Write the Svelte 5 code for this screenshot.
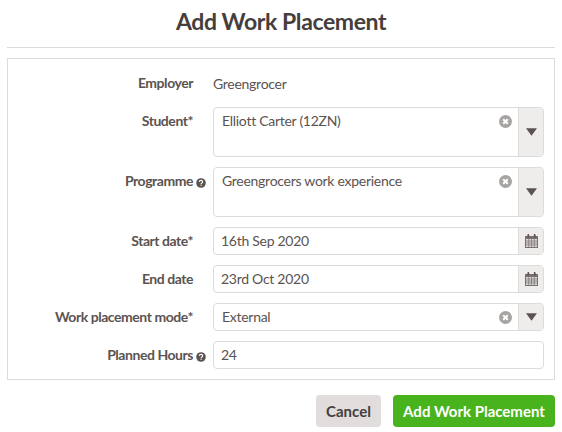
<script>
  const calendarRows = [0, 1, 2];
</script>

{#snippet help()}
  <svg class="help" viewBox="0 0 10 10" aria-hidden="true">
    <circle cx="5" cy="5" r="4.8" fill="#5b5351" />
    <path d="M3.3 3.9C3.4 2.9 4.1 2.4 5 2.4c1 0 1.7.6 1.7 1.4 0 .7-.4 1-.9 1.3-.4.2-.6.4-.6.9" fill="none" stroke="#fff" stroke-width="1.1" />
    <rect x="4.5" y="6.6" width="1.2" height="1.2" fill="#fff" />
  </svg>
{/snippet}

{#snippet clear()}
  <svg class="clear" viewBox="0 0 12 12" aria-hidden="true">
    <circle cx="6" cy="6" r="6" fill="#a8a4a2" />
    <path d="M3.9 3.9l4.2 4.2M8.1 3.9L3.9 8.1" stroke="#fff" stroke-width="1.9" />
  </svg>
{/snippet}

{#snippet arrow()}
  <span class="addon">
    <svg class="arrow" viewBox="0 0 10 7" aria-hidden="true"><path d="M0 0h10L5 7z" fill="#5b5351" /></svg>
  </span>
{/snippet}

{#snippet calendar()}
  <span class="addon">
    <svg class="cal" viewBox="0 0 13 14" aria-hidden="true">
      <rect x="0" y="2" width="13" height="12" fill="#77706e" />
      <rect x="1" y="5" width="11" height="8" fill="#dcd9d7" />
      {#each calendarRows as r}
        <path d="M1 {7 + r * 2}h11" stroke="#77706e" stroke-width="0.7" />
      {/each}
      <path d="M3.7 5v8M6.5 5v8M9.3 5v8" stroke="#77706e" stroke-width="0.7" />
      <rect x="2.4" y="0" width="1.8" height="3.6" rx="0.7" fill="#5b5351" />
      <rect x="8.8" y="0" width="1.8" height="3.6" rx="0.7" fill="#5b5351" />
    </svg>
  </span>
{/snippet}

<div class="dialog">
  <h1>Add Work Placement</h1>
  <hr />
  <form class="panel">
    <div class="row">
      <span class="label">Employer</span>
      <span class="static">Greengrocer</span>
    </div>
    <div class="row">
      <span class="label">Student*</span>
      <div class="field tall">
        <span class="value">Elliott Carter (12ZN)</span>
        {@render clear()}
        {@render arrow()}
      </div>
    </div>
    <div class="row">
      <span class="label">Programme{@render help()}</span>
      <div class="field tall">
        <span class="value">Greengrocers work experience</span>
        {@render clear()}
        {@render arrow()}
      </div>
    </div>
    <div class="row">
      <span class="label">Start date*</span>
      <div class="field">
        <span class="value date">16th Sep 2020</span>
        {@render calendar()}
      </div>
    </div>
    <div class="row">
      <span class="label">End date</span>
      <div class="field">
        <span class="value date">23rd Oct 2020</span>
        {@render calendar()}
      </div>
    </div>
    <div class="row">
      <span class="label">Work placement mode*</span>
      <div class="field">
        <span class="value">External</span>
        {@render clear()}
        {@render arrow()}
      </div>
    </div>
    <div class="row">
      <span class="label">Planned Hours{@render help()}</span>
      <div class="field">
        <span class="value date">24</span>
      </div>
    </div>
  </form>
  <div class="actions">
    <button type="button" class="cancel">Cancel</button>
    <button type="button" class="submit">Add Work Placement</button>
  </div>
</div>

<style>
  :global(body) {
    background: #fff;
  }

  .dialog {
    width: 548px;
    padding: 0 7px;
    font-family: "Lato", "Open Sans", sans-serif;
    font-size: 14px;
    letter-spacing: -0.28px;
    color: #5b5351;
  }

  h1 {
    margin: 0;
    height: 47px;
    padding-top: 6px;
    box-sizing: border-box;
    font-size: 23px;
    line-height: 30px;
    font-weight: 700;
    letter-spacing: -0.4px;
    text-align: center;
    color: #453e3c;
  }

  hr {
    margin: 0 0 10px;
    border: 0;
    border-top: 1px solid #dedcdb;
  }

  .panel {
    display: flex;
    flex-direction: column;
    gap: 10px;
    padding: 10px 10px 10px 0;
    border: 1px solid #dedcdb;
  }

  .row {
    display: flex;
    gap: 20px;
  }

  .label {
    position: relative;
    flex: 0 0 185px;
    height: 28px;
    text-align: right;
    font-weight: 700;
    letter-spacing: -0.45px;
    line-height: 28px;
  }

  .static {
    height: 28px;
    line-height: 29px;
  }

  .help {
    position: absolute;
    left: 188px;
    top: 11px;
    width: 10px;
    height: 10px;
  }

  .field {
    position: relative;
    flex: 1;
    display: flex;
    height: 28px;
    box-sizing: border-box;
    border: 1px solid #dedcdb;
    border-radius: 4px;
    overflow: hidden;
  }

  .field.tall {
    height: 50px;
  }

  .value {
    flex: 1;
    padding-left: 8px;
    height: 26px;
    line-height: 26px;
  }

  .value.date {
    padding-left: 7px;
  }

  .clear {
    position: absolute;
    right: 31px;
    top: 7px;
    width: 13px;
    height: 13px;
  }

  .addon {
    flex: 0 0 25px;
    box-sizing: border-box;
    display: flex;
    align-items: center;
    justify-content: center;
    background: #efedec;
    border-left: 1px solid #dedcdb;
  }

  .arrow {
    width: 11px;
    height: 8px;
  }

  .cal {
    width: 13px;
    height: 14px;
  }

  .actions {
    display: flex;
    justify-content: flex-end;
    gap: 12px;
    margin-top: 15px;
  }

  button {
    height: 32px;
    border: 0;
    border-radius: 4px;
    font-family: inherit;
    font-size: 15px;
    font-weight: 700;
    padding: 0;
  }

  .cancel {
    width: 65px;
    background: #e0dddc;
    color: #453e3c;
  }

  .submit {
    width: 162px;
    background: #48b31d;
    color: #fff;
  }
</style>
